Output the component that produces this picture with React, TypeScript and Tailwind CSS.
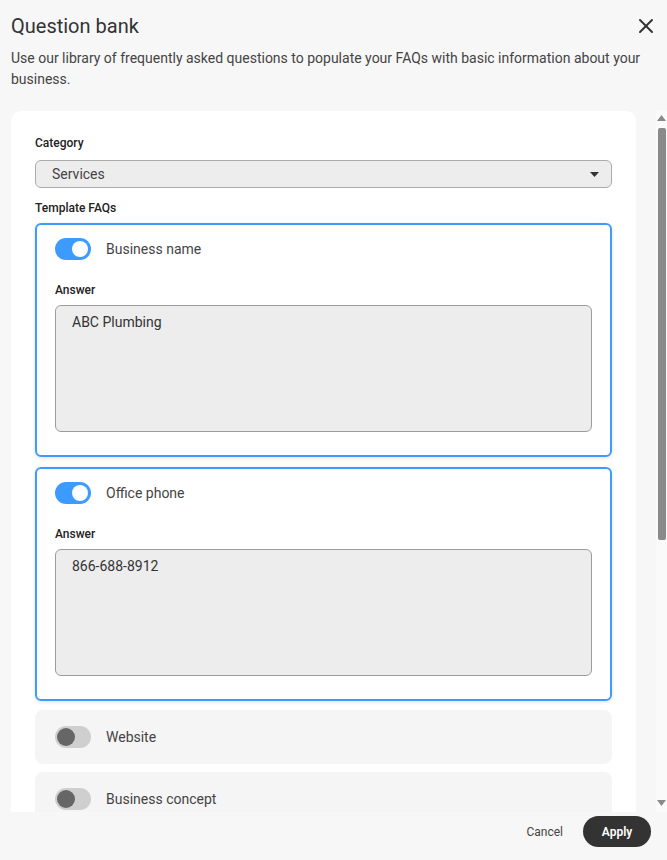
import { X } from "lucide-react"

interface ToggleProps {
  on: boolean
}

function Toggle({ on }: ToggleProps) {
  if (on) {
    return (
      <div className="flex h-[22px] w-[36px] shrink-0 items-center justify-end rounded-full bg-[#3d9bff] pr-[3px]">
        <div className="h-[16px] w-[16px] rounded-full bg-white" />
      </div>
    )
  }
  return (
    <div className="flex h-[22px] w-[36px] shrink-0 items-center rounded-full bg-[#cfcfcf] pl-[2px]">
      <div className="h-[18px] w-[18px] rounded-full bg-[#666666]" />
    </div>
  )
}

interface FaqProps {
  title: string
  answer?: string
  className?: string
}

function FaqCard({ title, answer, className = "" }: FaqProps) {
  if (answer === undefined) {
    return (
      <div className={`flex h-[54px] items-center gap-[15px] rounded-lg bg-[#f5f5f5] px-[20px] ${className}`}>
        <Toggle on={false} />
        <span className="text-[14px] text-[#444]">{title}</span>
      </div>
    )
  }
  return (
    <div
      className={`rounded-md border-2 border-[#3d9bff] px-[18px] pt-[13px] pb-[23px] shadow-[0_1px_4px_rgba(0,0,0,0.12)] ${className}`}
    >
      <div className="flex items-center gap-[15px]">
        <Toggle on />
        <span className="text-[14px] text-[#444]">{title}</span>
      </div>
      <div className="mt-[22px] text-[12px] leading-[16px] font-medium text-[#222]">Answer</div>
      <div className="mt-[7px] h-[127px] rounded-md border border-[#9c9c9c] bg-[#ededed] px-[16px] pt-[6px] text-[14px] leading-[20px] text-[#333]">
        {answer}
      </div>
    </div>
  )
}

export default function App() {
  return (
    <div
      className="flex h-[860px] w-[667px] flex-col overflow-hidden bg-[#f7f7f7]"
      style={{ fontFamily: "Roboto, 'Noto Sans', sans-serif" }}
    >
      {/* header */}
      <div className="px-[11px] pt-[12px]">
        <div className="flex items-center justify-between">
          <h1 className="text-[20px] leading-[28px] text-[#333]">Question bank</h1>
          <X className="mr-[-2px] h-[24px] w-[24px] text-[#333]" strokeWidth={2} />
        </div>
        <p className="mt-[8px] text-[14px] leading-[21px] text-[#444]">
          Use our library of frequently asked questions to populate your FAQs with basic information about your
          business.
        </p>
      </div>

      {/* body */}
      <div className="mt-[21px] flex h-[701px] shrink-0">
        <div className="flex-1 overflow-hidden">
          <div className="ml-[11px] w-[625px] rounded-t-[10px] bg-white px-[24px] pt-[24px] pb-[20px]">
            <div className="text-[12px] leading-[16px] font-medium text-[#222]">Category</div>
            <div className="mt-[9px] flex h-[28px] items-center justify-between rounded-md border border-[#ababab] bg-[#ededed] pr-[12px] pl-[16px]">
              <span className="text-[14px] text-[#444]">Services</span>
              <svg width="9" height="5" viewBox="0 0 9 5">
                <path d="M0 0 L9 0 L4.5 5 Z" fill="#333" />
              </svg>
            </div>
            <div className="mt-[12px] text-[12px] leading-[16px] font-medium text-[#222]">Template FAQs</div>
            <FaqCard className="mt-[7px]" title="Business name" answer="ABC Plumbing" />
            <FaqCard className="mt-[10px]" title="Office phone" answer="866-688-8912" />
            <FaqCard className="mt-[9px]" title="Website" />
            <FaqCard className="mt-[8px]" title="Business concept" />
          </div>
        </div>

        {/* scrollbar */}
        <div className="flex w-[11px] flex-col items-center bg-[#fafafa] pt-[4px] pb-[6px]">
          <svg width="9" height="6" viewBox="0 0 9 6" className="shrink-0">
            <path d="M0 6 L4.5 0 L9 6 Z" fill="#8a8a8a" />
          </svg>
          <div className="mt-[7px] h-[412px] w-[8px] rounded-[2px] bg-[#8a8a8a]" />
          <div className="flex-1" />
          <svg width="9" height="6" viewBox="0 0 9 6" className="shrink-0">
            <path d="M0 0 L9 0 L4.5 6 Z" fill="#8a8a8a" />
          </svg>
        </div>
      </div>

      {/* footer */}
      <div className="flex items-center justify-end gap-[20px] pt-[4px] pr-[16px]">
        <button className="text-[12px] text-[#444]">Cancel</button>
        <button className="h-[31px] w-[68px] rounded-full bg-[#333] text-[12px] font-semibold text-white">
          Apply
        </button>
      </div>
    </div>
  )
}
